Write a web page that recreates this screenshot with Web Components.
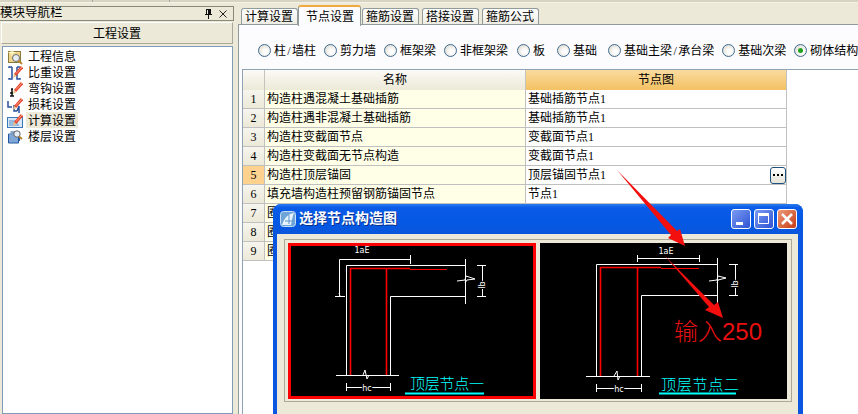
<!DOCTYPE html>
<html lang="zh-CN">
<head>
<meta charset="utf-8">
<title>节点设置</title>
<style>
  html, body { margin: 0; height: 100%; overflow: hidden; }
  body { font: 12px/16px "Liberation Serif", "Noto Sans CJK SC", serif; color: #000; background: #ece9d8; }
  .slash { display: inline-block; width: 6px; text-align: center; }
</style>
</head>
<body>
<cad-app>
  <nav-panel slot="nav" heading="模块导航栏" section="工程设置">
    <nav-item icon="info">工程信息</nav-item>
    <nav-item icon="ratio">比重设置</nav-item>
    <nav-item icon="hook">弯钩设置</nav-item>
    <nav-item icon="loss">损耗设置</nav-item>
    <nav-item icon="calc" selected>计算设置</nav-item>
    <nav-item icon="floor">楼层设置</nav-item>
  </nav-panel>

  <tab-bar slot="tabs">
    <tab-item>计算设置</tab-item>
    <tab-item active>节点设置</tab-item>
    <tab-item>箍筋设置</tab-item>
    <tab-item>搭接设置</tab-item>
    <tab-item>箍筋公式</tab-item>
  </tab-bar>

  <radio-row slot="filters">
    <radio-opt>柱<span class="slash">/</span>墙柱</radio-opt>
    <radio-opt>剪力墙</radio-opt>
    <radio-opt>框架梁</radio-opt>
    <radio-opt>非框架梁</radio-opt>
    <radio-opt style="margin-left:1px">板</radio-opt>
    <radio-opt style="margin-left:4px">基础</radio-opt>
    <radio-opt style="margin-left:3px">基础主梁<span class="slash">/</span>承台梁</radio-opt>
    <radio-opt>基础次梁</radio-opt>
    <radio-opt checked>砌体结构</radio-opt>
  </radio-row>

  <node-grid slot="grid">
    <grid-row num="1"><span slot="name">构造柱遇混凝土基础插筋</span><span slot="node">基础插筋节点1</span></grid-row>
    <grid-row num="2"><span slot="name">构造柱遇非混凝土基础插筋</span><span slot="node">基础插筋节点1</span></grid-row>
    <grid-row num="3"><span slot="name">构造柱变截面节点</span><span slot="node">变截面节点1</span></grid-row>
    <grid-row num="4"><span slot="name">构造柱变截面无节点构造</span><span slot="node">变截面节点1</span></grid-row>
    <grid-row num="5" active><span slot="name">构造柱顶层锚固</span><span slot="node">顶层锚固节点1</span><more-button slot="tool"></more-button></grid-row>
    <grid-row num="6"><span slot="name">填充墙构造柱预留钢筋锚固节点</span><span slot="node">节点1</span></grid-row>
    <grid-row num="7"><span slot="name">圈</span></grid-row>
    <grid-row num="8"><span slot="name">圈</span></grid-row>
    <grid-row num="9"><span slot="name">圈</span></grid-row>
  </node-grid>

  <xp-dialog slot="dialog" heading="选择节点构造图">
    <detail-drawing kind="one" selected>顶层节点一</detail-drawing>
    <detail-drawing kind="two">顶层节点二</detail-drawing>
  </xp-dialog>

  <callout-layer slot="overlay">输入250</callout-layer>
</cad-app>

<script>
const pencil = `<path d="M8 10 15 2" stroke="#e8452c" stroke-width="3"/><path d="M9 8.500 15 2" stroke="#f9a08c"/><path d="M6 13l1-4 2.500 2z" fill="#e8c48a"/>`

const navIcons = {
  info: `<rect x="1.500" y="2.500" width="12" height="11" fill="#f0d48a" stroke="#8a7a3c"/><path d="M5 0v7M1.500 3.500h7M3 1.500l4 4M7 1.500l-4 4" stroke="#fff8c8"/><circle cx="9" cy="9" r="3.500" fill="#e8eef4" stroke="#6a6a6a"/><path d="M11.500 11.500 15 15" stroke="#b8862c" stroke-width="2"/>`,
  ratio: `<path d="M5 2H2v1M5 2v12H2v-1M10 2h3M10 2v12h3v-1" fill="none" stroke="#2a4f9c" stroke-width="1.500"/>${pencil}`,
  hook: `<path d="M6 8H4M5 8v7M3 15h4M3 12h3" fill="none" stroke="#111" stroke-width="1.500"/>${pencil}`,
  loss: `<path d="M1 4v6h4M7 8v6h3M10 14l2-5v7" fill="none" stroke="#2a4f9c" stroke-width="1.500"/>${pencil}`,
  calc: `<rect x=".5" y="4.500" width="15" height="10" fill="#d6e6f6" stroke="#3a78b8"/><path d="M2 8h7M2 10h9M2 12h10" stroke="#5a8fc4"/>${pencil}`,
  floor: `<path d="M1.500 5h10v9h-10zM3.500 3h9v9" fill="#cfe2f6" stroke="#23559c"/><path d="M2 7h9M2 9h9M2 11h9M2 13h9" stroke="#2f6cb8"/><circle cx="10" cy="5" r="3.200" fill="#e6eef6" stroke="#666"/><path d="M12 7.500 15 10" stroke="#b8862c" stroke-width="2"/>`
}

class NavItem extends HTMLElement {
  static get observedAttributes() {
    return ['icon']
  }

  constructor() {
    super()
    this.attachShadow({ mode: 'open' }).innerHTML = `
      <style>
        :host { display: flex; height: 16px; align-items: flex-start; padding-left: 4px; }
        svg { width: 16px; height: 16px; flex: none; margin: 1px 3px 0 0; }
        .label { padding: 0 2px; height: 16px; line-height: 18px; white-space: nowrap; }
        :host([selected]) .label { background: #ece9d8; }
      </style>
      <svg viewBox="0 0 16 16"></svg>
      <span class="label"><slot></slot></span>
    `
  }

  attributeChangedCallback(attrName, oldVal, newVal) {
    this.shadowRoot.querySelector('svg').innerHTML = navIcons[newVal] || ''
  }
}

class NavPanel extends HTMLElement {
  constructor() {
    super()
    this.attachShadow({ mode: 'open' }).innerHTML = `
      <style>
        :host { display: flex; flex-direction: column; width: 234px; height: 100%; box-sizing: border-box; padding-top: 3px; }
        .caption { display: flex; align-items: center; height: 13px; margin-bottom: 1px; border: 1px solid #8a8878; border-left: 0; font-size: 12.500px; }
        .caption span { flex: 1; line-height: 17px; }
        .caption svg { margin-right: 6px; flex: none; }
        .section { height: 22px; margin: 0 1px 2px; line-height: 23px; text-align: center; border: 1px solid #aca899; border-top-color: #fff; border-left-color: #fff; box-sizing: border-box; }
        .list { flex: 1; margin-left: 2px; margin-right: 1px; padding-top: 1px; background: #fff; border: 1px solid #7f9db9; }
      </style>
      <div class="caption">
        <span></span>
        <svg width="9" height="10" viewBox="0 0 9 10"><path d="M2 0h5v5h1v1H1V5h1zM4 6h1v4H4zM5 0v5" fill="#111"/><path d="M3 1h1v4H3z" fill="#ece9d8"/></svg>
        <svg width="8" height="8" viewBox="0 0 8 8"><path d="M.5.5l7 7M7.500.5l-7 7" stroke="#222"/></svg>
      </div>
      <div class="section"></div>
      <div class="list"><slot></slot></div>
    `
    this.shadowRoot.querySelector('.caption span').textContent = this.getAttribute('heading')
    this.shadowRoot.querySelector('.section').textContent = this.getAttribute('section')
  }
}

class TabItem extends HTMLElement {
  constructor() {
    super()
    this.attachShadow({ mode: 'open' }).innerHTML = `
      <style>
        :host { display: block; height: 16px; margin-top: 3px; padding: 0 4px 0 3px; line-height: 17px; white-space: nowrap; border: 1px solid #919b9c; border-bottom: 0; border-radius: 3px 3px 0 0; background: linear-gradient(#fff, #ecebe2); box-sizing: content-box; }
        :host([active]) { position: relative; z-index: 1; height: 19px; margin-top: 0; padding: 0 6px 0 7px; line-height: 20px; margin-left: -3px; margin-right: -2px; margin-bottom: -1px; background: #fcfcfe; border-top: 2px solid #f0a93c; }
      </style>
      <slot></slot>
    `
  }
}

class TabBar extends HTMLElement {
  constructor() {
    super()
    this.attachShadow({ mode: 'open' }).innerHTML = `
      <style>
        :host { display: flex; align-items: flex-end; gap: 3px; height: 20px; padding-left: 3px; }
      </style>
      <slot></slot>
    `
  }
}

class RadioOpt extends HTMLElement {
  constructor() {
    super()
    this.attachShadow({ mode: 'open' }).innerHTML = `
      <style>
        :host { display: flex; align-items: center; gap: 3px; white-space: nowrap; }
        .dot { width: 11px; height: 11px; border: 1px solid #3f6b93; border-radius: 50%; background: radial-gradient(circle at 60% 60%, #fff 20%, #dcd8cc 85%); display: grid; place-items: center; }
        .dot i { display: none; width: 5px; height: 5px; border-radius: 50%; background: #21a121; }
        :host([checked]) .dot i { display: block; }
        .text { padding-top: 1px; }
      </style>
      <span class="dot"><i></i></span>
      <span class="text"><slot></slot></span>
    `
  }
}

class RadioRow extends HTMLElement {
  constructor() {
    super()
    this.attachShadow({ mode: 'open' }).innerHTML = `
      <style>
        :host { display: flex; align-items: center; gap: 8px; height: 40px; padding: 5px 0 0 19px; margin-bottom: -1px; }
      </style>
      <slot></slot>
    `
  }
}

const gridColumns = 'grid-template-columns: 22px 261px 261px;'

class NodeGrid extends HTMLElement {
  constructor() {
    super()
    this.attachShadow({ mode: 'open' }).innerHTML = `
      <style>
        :host { display: block; flex: 1; margin-left: 3px; background: #fff; border-left: 1px solid #8fa3b5; border-top: 1px solid #8fa3b5; }
        .head { display: grid; ${gridColumns} width: 544px; height: 20px; text-align: center; line-height: 20px; }
        .head div { border-right: 1px solid #c4c4bc; border-bottom: 1px solid #c0c0b8; background: linear-gradient(#fbfaf5, #ece9d8); }
        .head .on { background: linear-gradient(#fadb9f, #f3c163); border-right-color: #c0c0c0; }
      </style>
      <div class="head"><div></div><div>名称</div><div class="on">节点图</div></div>
      <slot></slot>
    `
  }
}

class GridRow extends HTMLElement {
  constructor() {
    super()
    this.attachShadow({ mode: 'open' }).innerHTML = `
      <style>
        :host { display: grid; ${gridColumns} width: 544px; height: 19px; line-height: 18px; }
        div { border-right: 1px solid #c0c0c0; border-bottom: 1px solid #c0c0c0; white-space: nowrap; overflow: hidden; box-sizing: border-box; }
        .num { text-align: center; background: linear-gradient(#f6f5ee, #ece9d8); }
        :host([active]) .num { background: #fdd28e; }
        .name { background: #ffffe8; padding-left: 2px; }
        .node { display: flex; align-items: center; justify-content: space-between; padding-left: 2px; background: #fff; }
      </style>
      <div class="num"></div>
      <div class="name"><slot name="name"></slot></div>
      <div class="node"><slot name="node"></slot><slot name="tool"></slot></div>
    `
    this.shadowRoot.querySelector('.num').textContent = this.getAttribute('num')
  }
}

class MoreButton extends HTMLElement {
  constructor() {
    super()
    this.attachShadow({ mode: 'open' }).innerHTML = `
      <style>
        :host { display: flex; align-items: center; justify-content: center; gap: 2px; width: 14px; height: 15px; border: 1px solid #1c5180; border-radius: 3px; background: linear-gradient(#fff, #e6e4d8); }
        i { width: 2px; height: 2px; background: #000; }
      </style>
      <i></i><i></i><i></i>
    `
  }
}

class XpDialog extends HTMLElement {
  constructor() {
    super()
    this.attachShadow({ mode: 'open' }).innerHTML = `
      <style>
        :host { position: absolute; left: 273px; top: 204px; width: 530px; height: 240px; display: flex; flex-direction: column; border-radius: 8px 8px 0 0; background: #0a56e0; box-sizing: border-box; padding: 0 5px 0 4px; }
        .title { display: flex; align-items: center; height: 30px; flex: none; margin: 0 -5px 0 -4px; padding: 0 6px 0 7px; border-radius: 8px 8px 0 0; background: linear-gradient(#2c7cf0 0, #0a5ce8 12%, #0458e4 60%, #0a56dc 100%); }
        .logo { flex: none; width: 16px; height: 16px; margin-right: 3px; }
        h1 { flex: 1; margin: 0; font-size: 14px; line-height: 20px; font-weight: 700; color: #fff; text-shadow: 1px 1px #0a2f8c; white-space: nowrap; }
        .btn { flex: none; width: 18px; height: 18px; margin-left: 3px; border: 1px solid #fff; border-radius: 3px; background: linear-gradient(135deg, #7a9cf2, #2f52d4); }
        .btn.close { background: linear-gradient(135deg, #ee9a78, #c63c16); }
        .btn svg { display: block; }
        .body { flex: 1; padding: 5px 6px 0 7px; background: #ece9d8; }
        .group { display: flex; gap: 4px; height: 157px; padding: 3px 4px 1px 3px; border: 1px solid #aca899; }
      </style>
      <div class="title">
        <svg class="logo" viewBox="0 0 16 16"><rect x=".5" y=".5" width="15" height="15" rx="3" fill="#6ea4d8" stroke="#c8e0f6"/><path d="M2 14C4 7 8 3 14 2c-2 4-2 8-3 12z" fill="#e6f2fc"/><path d="M5 10h8M9 4v9" stroke="#5c94cc"/></svg>
        <h1></h1>
        <span class="btn"><svg width="18" height="18"><path d="M4 12h7v3H4z" fill="#fff"/></svg></span>
        <span class="btn"><svg width="18" height="18"><path d="M3.500 4.500h10v9h-10z" fill="none" stroke="#fff"/><path d="M3 3h11v3H3z" fill="#fff"/></svg></span>
        <span class="btn close"><svg width="18" height="18"><path d="M4 4l10 10M14 4 4 14" stroke="#fff" stroke-width="2.500"/></svg></span>
      </div>
      <div class="body"><div class="group"><slot></slot></div></div>
    `
    this.shadowRoot.querySelector('h1').textContent = this.getAttribute('heading')
  }
}

// the two details are nearly the same sketch, only the numbers differ
const sketch = (d) => `
  <g fill="none" stroke="#fff">
    ${d.lines.map((l) => `<path d="${l}"/>`).join('')}
  </g>
  <g fill="none" stroke="#f00">
    <path d="${d.red}" stroke-width="1"/>
    <path d="${d.redThick}" stroke-width="1.600"/>
  </g>
  <g class="dim">
    <text x="${d.la[0]}" y="${d.la[1]}">1aE</text>
    <text x="${d.hc[0]}" y="${d.hc[1]}">hc</text>
    <text transform="translate(${d.lb[0]} ${d.lb[1]}) rotate(-90)">lb</text>
  </g>
  <path d="${d.under}" stroke="#0ff" stroke-width="2"/>
  <text class="cap" x="${d.cap[0]}" y="${d.cap[1]}" textLength="${d.cap[2]}"></text>
`

const sketches = {
  one: {
    box: '288 243 248 156',
    lines: [
      'M339.500 297V259.500H410.500M410.500 255V264',
      'M335 296.500H345M339 293l1 3',
      'M346.500 375V265.500H465.500M465.500 259V304',
      'M457 281l8-1 1-4 9 3-8 1-2 3',
      'M390.500 375V296.500H465.500',
      'M477 265.500h9M477 296.500h9M482.500 266V296',
      'M336 375.500H399M363 375l2-5 2 9 2-4',
      'M346.500 383v8M390.500 383v8M347 387.500H390'
    ],
    red: 'M410 269.500H447',
    redThick: 'M350.500 375V268.500H410M386.500 268.500V375',
    la: [362, 253],
    hc: [367, 391],
    lb: [485, 285],
    under: 'M405 393.500H484',
    cap: [410, 389, 74]
  },
  two: {
    box: '540 243 247 156',
    lines: [
      'M637.500 255v7M699.500 255v7M637 258.500H699',
      'M596.500 376V264.500H717.500M717.500 258V303',
      'M709 281l8-1 1-4 8 2-8 2-1 3',
      'M641.500 376V295.500H717.500',
      'M729 264.500h9M729 295.500h9M735.500 265V295',
      'M586 376.500H650M614 376l3-5 1 9 2-4',
      'M596.500 384v8M641.500 384v8M597 388.500H641'
    ],
    red: 'M661 268.500H699',
    redThick: 'M600.500 376V267.500H661M637.500 267.500V376',
    la: [666, 254],
    hc: [619, 392],
    lb: [738, 284],
    under: 'M659 393.500H736',
    cap: [661, 390, 78]
  }
}

class DetailDrawing extends HTMLElement {
  connectedCallback() {
    const kind = sketches[this.getAttribute('kind')]
    const [, , w, h] = kind.box.split(' ')
    const shadow = this.attachShadow({ mode: 'open' })
    shadow.innerHTML = `
      <style>
        :host { display: block; flex: none; width: ${w}px; height: ${h}px; background: #000; position: relative; }
        svg { display: block; }
        .dim text { font-size: 8px; fill: #fff; text-anchor: middle; stroke: #000; stroke-width: 2px; paint-order: stroke; font-family: "DejaVu Sans", sans-serif; }
        .cap { font-size: 15px; fill: #0ff; font-family: "Noto Sans CJK SC", sans-serif; font-weight: 300; }
        .frame { position: absolute; inset: 0; border: 3px solid #f00; display: none; }
        :host([selected]) .frame { display: block; }
      </style>
      <svg width="${w}" height="${h}" viewBox="${kind.box}">${sketch(kind)}</svg>
      <div class="frame"></div>
    `
    shadow.querySelector('.cap').textContent = this.textContent
  }
}

class CalloutLayer extends HTMLElement {
  constructor() {
    super()
    this.attachShadow({ mode: 'open' }).innerHTML = `
      <style>
        :host { position: absolute; inset: 0; pointer-events: none; }
        svg { position: absolute; left: 0; top: 0; }
        .note { position: absolute; left: 674px; top: 317px; font: 300 24px/30px "Liberation Sans", "Noto Sans CJK SC", sans-serif; color: #e81010; white-space: nowrap; }
      </style>
      <svg width="858" height="414" viewBox="0 0 858 414" fill="#f40f0f">
        <path d="M617 170 677 231 680 229 685 246 668 238 671 235z"/>
        <path d="M664 255 714 305 718 302 723 318 705 310 709 307z"/>
      </svg>
      <div class="note"><slot></slot></div>
    `
  }
}

class CadApp extends HTMLElement {
  constructor() {
    super()
    this.attachShadow({ mode: 'open' }).innerHTML = `
      <style>
        :host { display: flex; flex-direction: column; position: relative; width: 858px; height: 414px; overflow: hidden; }
        .strip { flex: none; height: 2px; border-bottom: 1px solid #f4f2e8; background: linear-gradient(90deg, transparent 92px, #aca899 92px, #aca899 93px, transparent 93px, transparent 169px, #aca899 169px, #aca899 170px, transparent 170px) #d8d4c2; }
        .main { flex: 1; display: flex; min-height: 0; }
        .nav { flex: none; width: 234px; }
        .right { flex: 1; display: flex; flex-direction: column; min-width: 0; padding: 2px 0 0 4px; }
        .page { flex: 1; display: flex; flex-direction: column; min-height: 0; background: #fcfcfe; border: 1px solid #919b9c; border-right: 0; border-bottom: 0; margin-top: -1px; }
      </style>
      <div class="strip"></div>
      <div class="main">
        <div class="nav"><slot name="nav"></slot></div>
        <div class="right">
          <slot name="tabs"></slot>
          <div class="page">
            <slot name="filters"></slot>
            <slot name="grid"></slot>
          </div>
        </div>
      </div>
      <slot name="dialog"></slot>
      <slot name="overlay"></slot>
    `
  }
}

customElements.define('nav-item', NavItem)
customElements.define('nav-panel', NavPanel)
customElements.define('tab-item', TabItem)
customElements.define('tab-bar', TabBar)
customElements.define('radio-opt', RadioOpt)
customElements.define('radio-row', RadioRow)
customElements.define('node-grid', NodeGrid)
customElements.define('grid-row', GridRow)
customElements.define('more-button', MoreButton)
customElements.define('xp-dialog', XpDialog)
customElements.define('detail-drawing', DetailDrawing)
customElements.define('callout-layer', CalloutLayer)
customElements.define('cad-app', CadApp)
</script>
</body>
</html>
